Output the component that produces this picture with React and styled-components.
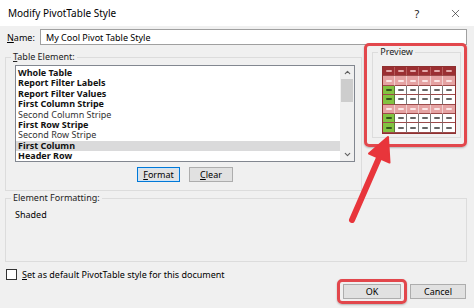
import React from 'react'
import styled, { createGlobalStyle } from 'styled-components'
import { ChevronUp, ChevronDown, X } from 'lucide-react'

const GlobalStyle = createGlobalStyle`
  body {
    margin: 0;
    background: #f0f0f0;
    font-family: "Noto Sans", "Open Sans", sans-serif;
  }
`

const Window = styled.div`
  position: relative;
  width: 474px;
  height: 308px;
  overflow: hidden;
  background: #f0f0f0;
  color: #000;
  font-size: 9px;
`
const TitleBar = styled.div`
  height: 26px;
  background: #fff;
  display: flex;
  align-items: center;
  padding-left: 8px;
  font-size: 10px;
`
const Title = styled.div`
  flex: 1;
`
const TitleButton = styled.div`
  width: 38px;
  display: flex;
  justify-content: center;
  font-size: 11px;
  color: #222;
`
const Body = styled.div`
  padding: 3px 7px 0 5px;
`
const NameRow = styled.div`
  display: flex;
  align-items: center;
  height: 16px;
`
const Label = styled.span`
  padding-left: 2px;
  width: 33px;
`
const Input = styled.div`
  flex: 1;
  height: 16px;
  box-sizing: border-box;
  background: #fff;
  border: 1px solid #a0a0a0;
  display: flex;
  align-items: center;
  padding-left: 5px;
`
const MainRow = styled.div`
  display: flex;
  align-items: flex-start;
  margin-top: 6px;
`
const Group = styled.fieldset`
  margin: ${p => p.$marginTop || 0}px 0 0;
  padding: 0 0 ${p => p.$padBottom || 0}px;
  border: 1px solid #dcdcdc;
  width: ${p => p.$width}px;
  height: ${p => p.$height}px;
  box-sizing: border-box;
  min-width: 0;
`
const Legend = styled.legend`
  padding: 0 2px;
  margin-left: 5px;
  line-height: 12px;
  color: #222;
`
const Listbox = styled.div`
  margin: 2px 0 0 9px;
  width: 340px;
  height: 97px;
  box-sizing: border-box;
  background: #fff;
  border: 1px solid #828790;
  display: flex;
  overflow: hidden;
`
const Items = styled.div`
  flex: 1;
  padding-top: 2px;
`
const Item = styled.div`
  height: 10.4px;
  line-height: 10.4px;
  padding-left: 2px;
  font-weight: ${p => (p.$bold ? 700 : 400)};
  color: ${p => (p.$bold ? '#111' : '#333')};
  background: ${p => (p.$selected ? '#dadadb' : 'transparent')};
`
const Scrollbar = styled.div`
  width: 14px;
  background: #f0f0f0;
  display: flex;
  flex-direction: column;
  align-items: center;
  color: #606060;
`
const ScrollArrow = styled.div`
  height: 13px;
  display: flex;
  align-items: center;
`
const Thumb = styled.div`
  width: 12px;
  height: 23px;
  background: #cdcdcd;
`
const Spacer = styled.div`
  flex: 1;
`
const ButtonRow = styled.div`
  display: flex;
  gap: 9px;
  margin: 5px 0 0 131px;
`
const Button = styled.div`
  width: ${p => p.$width}px;
  height: 15px;
  box-sizing: border-box;
  background: #e1e1e1;
  border: 1px solid ${p => (p.$focused ? '#0078d7' : '#adadad')};
  box-shadow: ${p => (p.$focused ? 'inset 0 0 0 1px #cfe4f7' : 'none')};
  display: flex;
  align-items: center;
  justify-content: center;
  u { text-decoration: underline; }
`
const Highlight = styled.div`
  border: 3px solid #e2474c;
  border-radius: 5px;
  box-shadow: 0 1px 2px rgba(0, 0, 0, 0.25);
  box-sizing: border-box;
`
const PreviewBox = styled(Highlight)`
  width: 103px;
  height: 104px;
  margin: -8px 0 0 2px;
  padding: 0 0 0 5px;
`
const PreviewTable = styled.div`
  margin: 8px 0 0 9px;
  width: 74px;
  display: grid;
  grid-template-columns: repeat(6, 1fr);
  border: 1px solid #8f3030;
  box-sizing: border-box;
`
const Cell = styled.div`
  height: 9.4px;
  box-sizing: border-box;
  display: flex;
  align-items: center;
  justify-content: center;
  background: ${p => p.$bg};
  border-right: 1px solid ${p => p.$line};
  border-bottom: 1px solid #9c4a4a;
  &:nth-child(6n) { border-right: none; }
  &::after {
    content: '';
    width: 6px;
    height: 2px;
    border-radius: 1px;
    background: ${p => p.$ink};
  }
`
const CheckRow = styled.div`
  display: flex;
  align-items: center;
  gap: 5px;
  margin-top: 6px;
  padding-left: 1px;
  height: 12px;
`
const Checkbox = styled.div`
  width: 11px;
  height: 11px;
  box-sizing: border-box;
  background: #fff;
  border: 1px solid #333;
`
const Footer = styled.div`
  display: flex;
  justify-content: flex-end;
  align-items: center;
  margin-top: -1px;
  padding-right: 1px;
`
const OkBox = styled(Highlight)`
  padding: 2px 3px;
`
const Gap = styled.div`
  width: 3px;
`
const Shaded = styled.div`
  padding: 4px 0 0 9px;
`
const Arrow = styled.svg`
  position: absolute;
  left: 0;
  top: 0;
  pointer-events: none;
`

const items = [
  ['Whole Table', true],
  ['Report Filter Labels', true],
  ['Report Filter Values', true],
  ['First Column Stripe', true],
  ['Second Column Stripe', false],
  ['First Row Stripe', true],
  ['Second Row Stripe', false],
  ['First Column', true, true],
  ['Header Row', true],
]

const rows = ['header', 'pink', 'white', 'white', 'pink', 'white', 'white']

function cellStyle(row, col) {
  if (row === 'header') return { bg: '#9b2f32', line: '#b75a5a', ink: '#e3a9a9' }
  if (row === 'pink') return { bg: '#e5a3a3', line: '#f2d0d0', ink: '#fbe6e6' }
  if (col === 0) return { bg: '#82c341', line: '#5b7a3a', ink: '#35561c' }
  return { bg: '#fff', line: '#777', ink: '#666' }
}

export default function App() {
  return (
    <>
      <GlobalStyle />
      <Window>
        <TitleBar>
          <Title>Modify PivotTable Style</Title>
          <TitleButton>?</TitleButton>
          <TitleButton><X size={13} strokeWidth={1.2} /></TitleButton>
        </TitleBar>
        <Body>
          <NameRow>
            <Label><u>N</u>ame:</Label>
            <Input>My Cool Pivot Table Style</Input>
          </NameRow>
          <MainRow>
            <Group $width={358} $height={140} $padBottom={8}>
              <Legend><u>T</u>able Element:</Legend>
              <Listbox>
                <Items>
                  {items.map(([text, bold, selected]) => (
                    <Item key={text} $bold={bold} $selected={selected}>{text}</Item>
                  ))}
                </Items>
                <Scrollbar>
                  <ScrollArrow><ChevronUp size={9} strokeWidth={3} /></ScrollArrow>
                  <Thumb />
                  <Spacer />
                  <ScrollArrow><ChevronDown size={9} strokeWidth={3} /></ScrollArrow>
                </Scrollbar>
              </Listbox>
              <ButtonRow>
                <Button $width={43} $focused><span><u>F</u>ormat</span></Button>
                <Button $width={44}><span><u>C</u>lear</span></Button>
              </ButtonRow>
            </Group>
            <PreviewBox>
              <Group $width={89} $height={92}>
                <Legend>Preview</Legend>
                <PreviewTable>
                  {rows.map((row, r) =>
                    [0, 1, 2, 3, 4, 5].map(c => {
                      const s = cellStyle(row, c)
                      return <Cell key={r + '-' + c} $bg={s.bg} $line={s.line} $ink={s.ink} />
                    })
                  )}
                </PreviewTable>
              </Group>
            </PreviewBox>
          </MainRow>
          <Group $width={462} $height={70} $marginTop={1}>
            <Legend>Element Formatting:</Legend>
            <Shaded>Shaded</Shaded>
          </Group>
          <CheckRow>
            <Checkbox />
            <span><u>S</u>et as default PivotTable style for this document</span>
          </CheckRow>
          <Footer>
            <OkBox>
              <Button $width={58}>OK</Button>
            </OkBox>
            <Gap />
            <Button $width={56}>Cancel</Button>
          </Footer>
        </Body>
        <Arrow width="474" height="308" viewBox="0 0 474 308">
          <line x1="352" y1="220" x2="379" y2="158" stroke="#e8353b" strokeWidth="6" strokeLinecap="round" />
          <polygon points="388,137 369,153.5 389.5,162.5" fill="#e8353b" stroke="#e8353b" strokeWidth="2" strokeLinejoin="round" />
        </Arrow>
      </Window>
    </>
  )
}
